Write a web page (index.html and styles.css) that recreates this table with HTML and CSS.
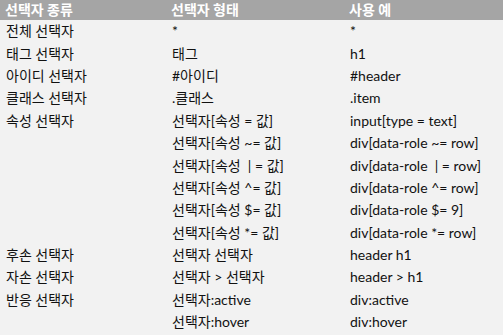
FILE: index.html
```html
<!DOCTYPE html>
<html lang="ko">
<head>
<meta charset="utf-8">
<link rel="stylesheet" href="styles.css">
</head>
<body>
<table class="sel-table">
  <thead>
    <tr><th class="c1">선택자 종류</th><th class="c2">선택자 형태</th><th class="c3">사용 예</th></tr>
  </thead>
  <tbody>
    <tr><td>전체 선택자</td><td>*</td><td>*</td></tr>
    <tr><td>태그 선택자</td><td>태그</td><td>h1</td></tr>
    <tr><td>아이디 선택자</td><td>#아이디</td><td>#header</td></tr>
    <tr><td>클래스 선택자</td><td>.클래스</td><td>.item</td></tr>
    <tr><td>속성 선택자</td><td>선택자[속성 = 값]</td><td>input[type = text]</td></tr>
    <tr><td></td><td>선택자[속성 ~= 값]</td><td>div[data-role ~= row]</td></tr>
    <tr><td></td><td>선택자[속성 &nbsp;| = 값]</td><td>div[data-role &nbsp;| = row]</td></tr>
    <tr><td></td><td>선택자[속성 ^= 값]</td><td>div[data-role ^= row]</td></tr>
    <tr><td></td><td>선택자[속성 $= 값]</td><td>div[data-role $= 9]</td></tr>
    <tr><td></td><td>선택자[속성 *= 값]</td><td>div[data-role *= row]</td></tr>
    <tr><td>후손 선택자</td><td>선택자 선택자</td><td>header h1</td></tr>
    <tr><td>자손 선택자</td><td>선택자 &gt; 선택자</td><td>header &gt; h1</td></tr>
    <tr><td>반응 선택자</td><td>선택자:active</td><td>div:active</td></tr>
    <tr><td></td><td>선택자:hover</td><td>div:hover</td></tr>
  </tbody>
</table>
</body>
</html>
```
FILE: styles.css
```css
html, body {
  margin: 0;
  padding: 0;
  background: #f2f2f2;
}
body {
  width: 503px;
  height: 335px;
  overflow: hidden;
  font-family: Lato, "Noto Sans CJK KR", sans-serif;
  font-size: 14px;
  color: #111;
}
.sel-table {
  width: 503px;
  border-collapse: collapse;
  table-layout: fixed;
}
.sel-table th {
  background: #a5a5a5;
  color: #fff;
  font-weight: bold;
  text-align: left;
  height: 20px;
  padding: 0 0 0 5px;
  line-height: 20px;
}
.sel-table .c1 { width: 161px; }
.sel-table .c2 { width: 173px; }
.sel-table td {
  height: 22.4px;
  padding: 0 0 0 6px;
  line-height: 20px;
  white-space: pre;
}
```
